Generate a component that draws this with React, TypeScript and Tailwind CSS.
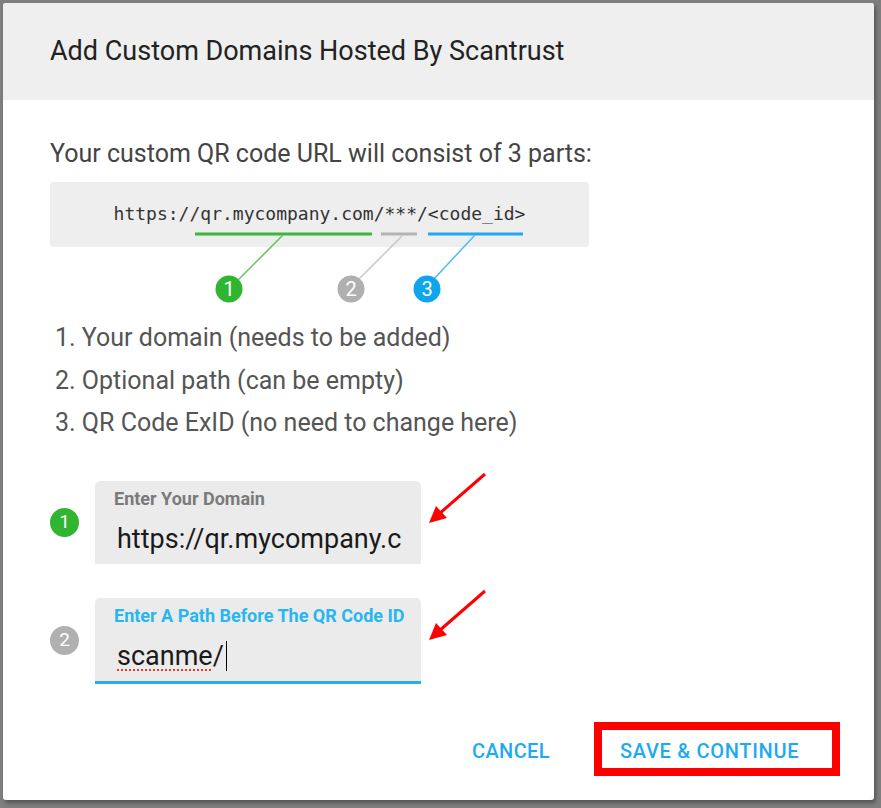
import React from 'react'

// Small numbered dot beside the inputs
function NumberDot({ n, color }: { n: number; color: string }) {
  return (
    <div
      className={`flex h-[29px] w-[29px] shrink-0 items-center justify-center rounded-full text-[19px] text-white ${color}`}
    >
      {n}
    </div>
  )
}

function RedArrow({ className }: { className: string }) {
  return (
    <svg className={className} width="64" height="56" viewBox="0 0 64 56" fill="none">
      <line x1="58" y1="3" x2="12" y2="43" stroke="#ff0000" strokeWidth="3" />
      <polygon points="2,52 9,35 20,47" fill="#ff0000" />
    </svg>
  )
}

export default function App() {
  return (
    <div className="h-[808px] w-[881px] bg-[#7f7f7f] p-[3px] font-['Roboto',sans-serif]">
      <div className="relative flex h-[797px] w-[871px] flex-col overflow-hidden rounded-[3px] bg-white shadow-[2px_3px_4px_rgba(0,0,0,0.35)]">
        {/* Header */}
        <div className="flex h-[97px] items-center bg-[#efefef] pl-[47px]">
          <h2 className="text-[27px] text-[#222]">Add Custom Domains Hosted By Scantrust</h2>
        </div>

        {/* Body */}
        <div className="flex flex-col pl-[47px]">
          <p className="mt-[39px] text-[25px] leading-[30px] text-[#444]">
            Your custom QR code URL will consist of 3 parts:
          </p>

          {/* URL diagram */}
          <div className="relative mt-[13px] h-[122px] w-[539px]">
            <div className="flex h-[65px] items-center justify-center rounded-[4px] bg-[#eeeeee] pb-[2px]">
              <span className="font-['DejaVu_Sans_Mono',monospace] text-[18px] text-[#333]">
                https://qr.mycompany.com/***/&lt;code_id&gt;
              </span>
            </div>
            <svg className="absolute left-0 top-0" width="539" height="122" viewBox="0 0 539 122">
              <line x1="145" y1="52" x2="322" y2="52" stroke="#3bb53b" strokeWidth="3" />
              <line x1="331" y1="52" x2="367" y2="52" stroke="#b3b3b3" strokeWidth="3" />
              <line x1="378" y1="52" x2="473" y2="52" stroke="#21a8ee" strokeWidth="3" />
              <line x1="233" y1="53" x2="188" y2="98" stroke="#5fc55f" strokeWidth="1.5" />
              <line x1="353" y1="53" x2="308" y2="98" stroke="#c8c8c8" strokeWidth="1.5" />
              <line x1="425" y1="53" x2="383" y2="98" stroke="#4cbcf2" strokeWidth="1.5" />
              <circle cx="179" cy="107" r="13.5" fill="#2fb52f" />
              <circle cx="301" cy="107" r="13.5" fill="#b0b0b0" />
              <circle cx="377" cy="107" r="13.5" fill="#0ea5ec" />
              <text x="179" y="114" textAnchor="middle" fontSize="20" fill="#fff" fontFamily="Roboto">1</text>
              <text x="301" y="114" textAnchor="middle" fontSize="20" fill="#fff" fontFamily="Roboto">2</text>
              <text x="377" y="114" textAnchor="middle" fontSize="20" fill="#fff" fontFamily="Roboto">3</text>
            </svg>
          </div>

          <ol className="mt-[13px] flex flex-col pl-[5px] text-[25px] leading-[42.5px] text-[#555]">
            <li>1. Your domain (needs to be added)</li>
            <li>2. Optional path (can be empty)</li>
            <li>3. QR Code ExID (no need to change here)</li>
          </ol>

          {/* Inputs */}
          <div className="mt-[36px] flex flex-col gap-[34px]">
            <div className="flex items-center gap-[16px]">
              <NumberDot n={1} color="bg-[#2fb52f]" />
              <div className="flex h-[83px] w-[326px] flex-col rounded-t-[5px] bg-[#ebebeb] pl-[19px] pt-[7px]">
                <span className="text-[18px] font-bold leading-[22px] text-[#7a7a7a]">Enter Your Domain</span>
                <span className="mt-[13px] pl-[3px] text-[27px] leading-[32px] text-[#1a1a1a]">https://qr.mycompany.c</span>
              </div>
            </div>
            <div className="flex items-center gap-[16px]">
              <NumberDot n={2} color="bg-[#b0b0b0]" />
              <div className="flex h-[86px] w-[326px] flex-col rounded-t-[5px] border-b-[3px] border-[#29aee8] bg-[#ebebeb] pl-[19px] pt-[7px]">
                <span className="text-[18px] font-bold leading-[22px] text-[#29b6f0]">Enter A Path Before The QR Code ID</span>
                <span className="mt-[13px] flex items-center pl-[3px] text-[27px] leading-[32px] text-[#1a1a1a]">
                  <span className="underline decoration-[#e53935] decoration-dotted decoration-2 underline-offset-[5px]">scanme</span>
                  /
                  <span className="ml-[2px] inline-block h-[30px] w-[1.5px] bg-black" />
                </span>
              </div>
            </div>
          </div>
        </div>

        {/* Footer */}
        <div className="mt-auto flex items-center justify-end pb-[24px] pr-[34px]">
          <button className="mr-[44px] pt-[3px] text-[20px] font-medium tracking-[0.4px] text-[#1eaaf1]">CANCEL</button>
          <button className="flex h-[54px] w-[246px] items-center border-[8px] border-[#ff0000] pl-[18px] pt-[3px] text-[20px] font-medium tracking-[0.7px] text-[#1eaaf1]">
            SAVE &amp; CONTINUE
          </button>
        </div>

        <RedArrow className="absolute left-[424px] top-[468px]" />
        <RedArrow className="absolute left-[424px] top-[585px]" />
      </div>
    </div>
  )
}
